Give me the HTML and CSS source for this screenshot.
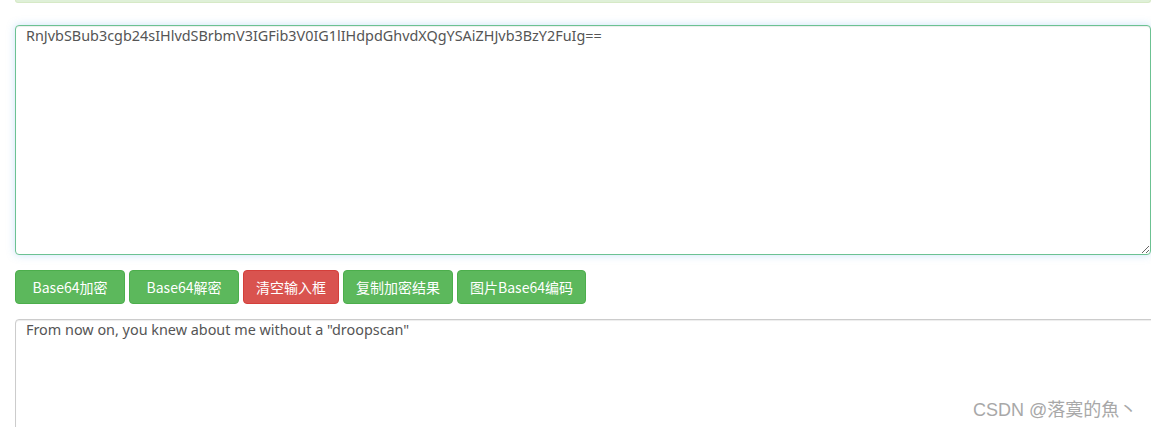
FILE: index.html
```html
<!DOCTYPE html>
<html lang="zh-CN">
<head>
<meta charset="utf-8">
<title>Base64</title>
<link rel="stylesheet" href="styles.css">
</head>
<body>
<div class="page">
  <div class="alert"></div>
  <textarea class="box box-focus">RnJvbSBub3cgb24sIHlvdSBrbmV3IGFib3V0IG1lIHdpdGhvdXQgYSAiZHJvb3BzY2FuIg==</textarea>
  <div class="actions">
    <button class="btn btn-success">Base64加密</button>
    <button class="btn btn-success">Base64解密</button>
    <button class="btn btn-danger">清空输入框</button>
    <button class="btn btn-success">复制加密结果</button>
    <button class="btn btn-success">图片Base64编码</button>
  </div>
  <textarea class="box box-out">From now on, you knew about me without a "droopscan"</textarea>
</div>
<div class="watermark">CSDN @落寞的魚丶</div>
</body>
</html>
```
FILE: styles.css
```css
html, body {
  margin: 0;
  padding: 0;
  background: #fff;
  overflow: hidden;
  height: 427px;
}
body {
  font-family: "Noto Sans", "Noto Sans CJK SC", sans-serif;
  font-size: 14px;
  color: #555;
}
.page {
  padding-left: 15px;
  display: flex;
  flex-direction: column;
  align-items: flex-start;
}
.alert {
  width: 1136px;
  height: 3px;
  box-sizing: border-box;
  background: #dff0d8;
  border: 1px solid #d6e9c6;
  border-top: none;
  border-radius: 0 0 4px 4px;
}
.box {
  box-sizing: border-box;
  font-family: "Noto Sans", "Noto Sans CJK SC", sans-serif;
  font-size: 14.4px;
  line-height: 18px;
  color: #555;
  padding: 1px 10px;
  background: #fff;
  border-radius: 4px;
  outline: none;
  margin: 0;
}
.box-focus {
  margin-top: 22px;
  width: 1136px;
  height: 230px;
  border: 1px solid #6cc292;
  box-shadow: inset 0 1px 1px rgba(0,0,0,.075), 0 0 8px rgba(102,175,233,.35);
  resize: both;
}
.box-out {
  margin-top: 15px;
  width: 1160px;
  height: 140px;
  border: 1px solid #ccc;
  box-shadow: inset 0 1px 1px rgba(0,0,0,.075);
  resize: none;
}
.actions {
  margin-top: 15px;
  display: flex;
  gap: 4px;
}
.btn {
  font-family: "Noto Sans CJK SC", "Noto Sans", sans-serif;
  font-size: 14px;
  height: 34px;
  min-width: 110px;
  padding: 0 12px;
  border: 1px solid transparent;
  border-radius: 4px;
  color: #fff;
  cursor: pointer;
}
.btn-success {
  background: #5cb85c;
  border-color: #4cae4c;
}
.btn-danger {
  min-width: 0;
  background: #d9534f;
  border-color: #d43f3a;
}
.watermark {
  position: absolute;
  left: 973px;
  top: 395px;
  font-family: "Liberation Sans", "Noto Sans CJK SC", sans-serif;
  font-size: 18px;
  color: #a8a8a8;
  text-shadow: 0 0 1px #fff;
}
```
